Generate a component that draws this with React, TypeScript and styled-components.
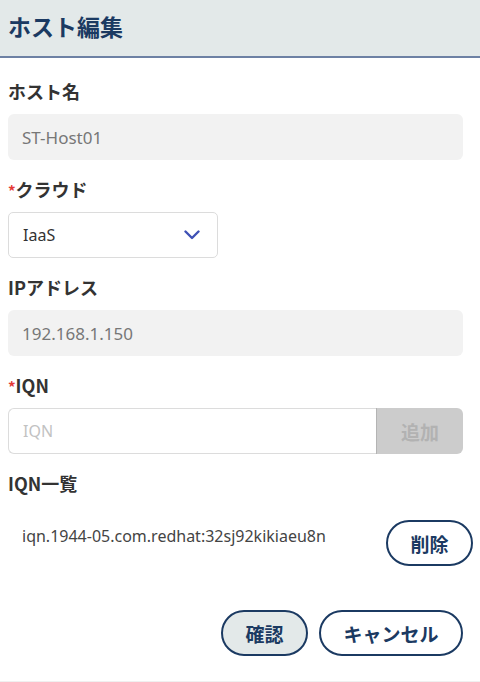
import React from "react";
import styled, { createGlobalStyle } from "styled-components";

const GlobalStyle = createGlobalStyle`
  html, body { margin: 0; padding: 0; background: #ffffff; }
  body {
    font-family: "Segoe UI", "Noto Sans", "Noto Sans CJK JP", sans-serif;
    color: #333333;
  }
  * { box-sizing: border-box; }
`;

const Page = styled.div`
  width: 480px;
  height: 682px;
  display: flex;
  flex-direction: column;
  background: #fff;
  border-bottom: 1px solid #f0f0f0;
`;

const Header = styled.header`
  height: 58px;
  flex: none;
  display: flex;
  align-items: center;
  padding: 0 8px 4px;
  background: #e3e9e9;
  border-bottom: 2px solid #6d81a4;
`;

const Title = styled.h1`
  margin: 0;
  font-family: "Noto Sans CJK JP", sans-serif;
  font-size: 23px;
  font-weight: 700;
  color: #1b3a62;
`;

const Body = styled.div`
  display: flex;
  flex-direction: column;
  gap: 17px;
  padding: 21px 17px 0 8px;
`;

const Field = styled.div`
  display: flex;
  flex-direction: column;
  gap: 11px;
`;

const Label = styled.label`
  display: block;
  height: 24px;
  line-height: 24px;
  font-family: "Noto Sans CJK JP", sans-serif;
  font-size: 18px;
  font-weight: 700;
  color: #333;
`;

const Req = styled.span`
  color: #e53935;
  font-size: 15px;
  font-weight: 700;
`;

const ReadOnly = styled.div`
  height: 46px;
  display: flex;
  align-items: center;
  padding: 0 14px;
  background: #f2f2f2;
  border-radius: 6px;
  font-size: 17px;
  color: #777;
`;

const Select = styled.div`
  width: 210px;
  height: 46px;
  display: flex;
  align-items: center;
  justify-content: space-between;
  padding: 0 17px 0 14px;
  border: 1px solid #dcdcdc;
  border-radius: 5px;
  font-size: 16px;
  color: #333;
`;

const InputGroup = styled.div`
  display: flex;
  height: 46px;
`;

const TextInput = styled.input`
  flex: 1;
  min-width: 0;
  height: 46px;
  padding: 0 14px;
  border: 1px solid #dcdcdc;
  border-right: none;
  border-radius: 6px 0 0 6px;
  font-family: "Segoe UI", "Noto Sans", sans-serif;
  font-size: 16px;
  color: #333;
  outline: none;
  &::placeholder { color: #c2c2c2; }
`;

const AddButton = styled.button`
  width: 87px;
  height: 46px;
  border: none;
  border-left: 1px solid #b4b4b4;
  border-radius: 0 6px 6px 0;
  background: #cccccc;
  color: #b2b2b2;
  font-family: "Noto Sans CJK JP", sans-serif;
  font-size: 19px;
  font-weight: 700;
  padding: 0;
`;

const ListRow = styled.div`
  display: flex;
  justify-content: space-between;
  align-items: flex-start;
  margin: 25px -10px 0 0;
  padding-left: 14px;
`;

const ListText = styled.span`
  font-size: 16px;
  color: #444;
  line-height: 22px;
  padding-top: 5px;
`;

const PillButton = styled.button<{ $w: number; $filled?: boolean }>`
  width: ${(p) => p.$w}px;
  height: 46px;
  border: 2px solid #1b3a62;
  border-radius: 23px;
  background: ${(p) => (p.$filled ? "#e3e9e9" : "#ffffff")};
  color: #1b3a62;
  font-family: "Noto Sans CJK JP", sans-serif;
  font-size: 19px;
  font-weight: 700;
  padding: 0;
`;

const Footer = styled.div`
  display: flex;
  justify-content: flex-end;
  gap: 11px;
  margin-top: 44px;
`;

const Chevron = () => (
  <svg width="16" height="10" viewBox="0 0 16 10">
    <path d="M1.5 1.5 L8 8 L14.5 1.5" fill="none" stroke="#3f51b5" strokeWidth="2.4" strokeLinecap="round" strokeLinejoin="round" />
  </svg>
);

export default function App() {
  return (
    <>
      <GlobalStyle />
      <Page>
        <Header>
          <Title>ホスト編集</Title>
        </Header>
        <Body>
          <Field>
            <Label>ホスト名</Label>
            <ReadOnly>ST-Host01</ReadOnly>
          </Field>
          <Field>
            <Label><Req>*</Req>クラウド</Label>
            <Select>
              <span>IaaS</span>
              <Chevron />
            </Select>
          </Field>
          <Field>
            <Label>IPアドレス</Label>
            <ReadOnly>192.168.1.150</ReadOnly>
          </Field>
          <Field>
            <Label><Req>*</Req>IQN</Label>
            <InputGroup>
              <TextInput placeholder="IQN" />
              <AddButton disabled>追加</AddButton>
            </InputGroup>
          </Field>
          <div>
            <Label>IQN一覧</Label>
            <ListRow>
              <ListText>iqn.1944-05.com.redhat:32sj92kikiaeu8n</ListText>
              <PillButton $w={87}>削除</PillButton>
            </ListRow>
            <Footer>
              <PillButton $w={87} $filled>確認</PillButton>
              <PillButton $w={144}>キャンセル</PillButton>
            </Footer>
          </div>
        </Body>
      </Page>
    </>
  );
}
